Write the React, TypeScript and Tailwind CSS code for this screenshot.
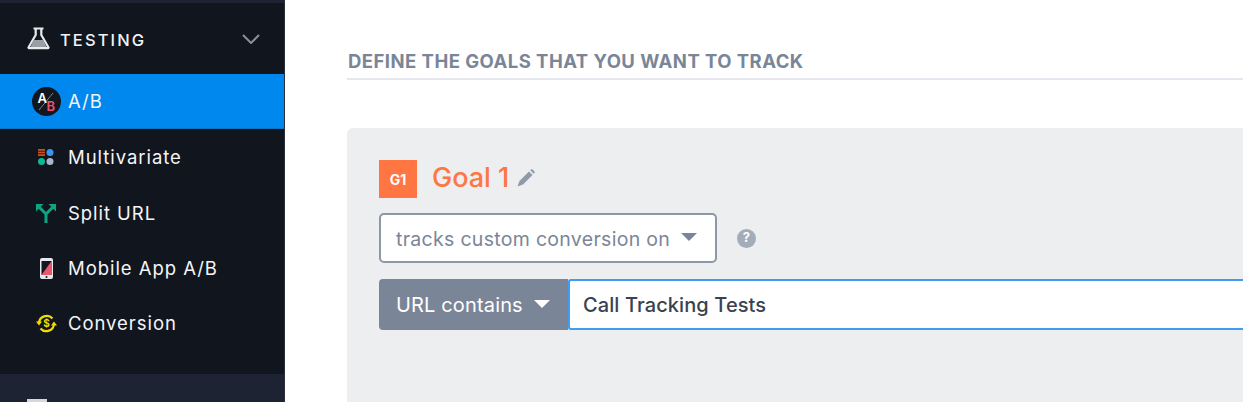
function Row({ icon, label, active }: { icon: React.ReactNode; label: string; active?: boolean }) {
  return (
    <div className={`flex items-center ${active ? "h-[55px] bg-[#0088ee] border-b border-[#0b74c4]" : "h-[55.4px]"}`}>
      <div className="w-[68px] flex justify-center pl-[24px] shrink-0">{icon}</div>
      <span className={`text-[18.5px] tracking-[0.95px] text-[#f4f5f7] ${active ? "pt-[1px]" : "pt-[3px]"}`}>{label}</span>
    </div>
  );
}

const AB = (
  <svg width="29" height="29" viewBox="0 0 29 29" className="shrink-0 mt-[1px]">
    <circle cx="14.5" cy="14.5" r="14.5" fill="#12161f" />
    <line x1="7" y1="23" x2="21" y2="6" stroke="#7d828c" strokeWidth="1" />
    <text x="5.5" y="15.5" fontSize="13" fontWeight="600" fill="#fff" fontFamily="Inter, sans-serif">A</text>
    <text x="14.5" y="24" fontSize="13" fontWeight="600" fill="#f0506e" fontFamily="Inter, sans-serif">B</text>
  </svg>
);

const Multi = (
  <svg width="16" height="16" viewBox="0 0 16 16" className="shrink-0">
    <rect x="0" y="0" width="7" height="1.8" fill="#c2511f" />
    <rect x="0" y="2.6" width="7" height="1.8" fill="#c2511f" />
    <rect x="0" y="5.2" width="7" height="1.8" fill="#c2511f" />
    <circle cx="12" cy="3.5" r="3.5" fill="#3b95ee" />
    <circle cx="3.5" cy="12.5" r="3.5" fill="#0fb893" />
    <circle cx="12" cy="12.5" r="3.5" fill="#aab4cf" />
  </svg>
);

const Split = (
  <svg width="20" height="20" viewBox="0 0 20 20" fill="none" className="shrink-0 mt-[2px]">
    <path d="M10 20V11L3 4M10 11L17 4" stroke="#0da583" strokeWidth="3" />
    <path d="M0 1H7.5L0 8.5ZM20 1H12.5L20 8.5Z" fill="#0da583" />
  </svg>
);

const Phone = (
  <svg width="13" height="21" viewBox="0 0 13 21" className="shrink-0 mt-[2px]">
    <rect x="0" y="0" width="13" height="21" rx="2" fill="#e6e8ee" />
    <rect x="1.5" y="3" width="10" height="14" fill="#12161f" />
    <path d="M11.5 3V17H1.5Z" fill="#e8566f" />
    <circle cx="6.5" cy="19" r="1" fill="#12161f" />
  </svg>
);

const Conv = (
  <svg width="21" height="21" viewBox="0 0 21 21" fill="none" stroke="#f5dc00" strokeWidth="2.2" className="shrink-0 mt-[2px]">
    <path d="M3 10.5A7.7 7.7 0 0 1 16.5 5.5" />
    <path d="M18 10.5A7.7 7.7 0 0 1 4.5 15.5" />
    <path d="M0 8.5L3 12.5L6 8.5Z" fill="#f5dc00" stroke="none" />
    <path d="M15 12.5L18 8.5L21 12.5Z" fill="#f5dc00" stroke="none" />
    <text x="10.5" y="14" textAnchor="middle" fontSize="10" fontWeight="700" fill="#f5dc00" stroke="none" fontFamily="Inter, sans-serif">$</text>
  </svg>
);

export default function App() {
  return (
    <div className="w-[1243px] h-[402px] overflow-hidden flex bg-white font-['Inter',sans-serif]">
      <aside className="w-[285px] shrink-0 h-full bg-[#11151e] border-r border-[#2a3040] flex flex-col">
        <div className="h-[3px] bg-[#1e2333]" />
        <div className="h-[71px] flex items-center pl-[27px] pr-[24px]">
          <svg width="23" height="23" viewBox="0 0 23 23" fill="none" className="mr-[10px]">
            <path d="M6.5 1.5H16.5M8.7 1.5V8L1.6 20.2a0.6 0.6 0 0 0 .5 1H20.9a0.6 0.6 0 0 0 .5-1L14.3 8V1.5" stroke="#e8eaee" strokeWidth="2.2" />
            <path d="M6.5 13H16.5L19.5 20H3.5Z" fill="#9a9ea6" />
          </svg>
          <span className="text-[16.5px] font-medium tracking-[2.1px] text-[#f1f2f4] pt-[4px]">TESTING</span>
          <svg width="18" height="10" viewBox="0 0 18 10" fill="none" className="ml-auto" stroke="#8b8f97" strokeWidth="2">
            <path d="M1 1L9 9L17 1" />
          </svg>
        </div>
        <Row active icon={AB} label="A/B" />
        <Row icon={Multi} label="Multivariate" />
        <Row icon={Split} label="Split URL" />
        <Row icon={Phone} label="Mobile App A/B" />
        <Row icon={Conv} label="Conversion" />
        <div className="mt-auto h-[28px] bg-[#1e2333] pl-[27px] pt-[25px]">
          <div className="w-[20px] h-[3px] bg-[#d5d7dc]" />
        </div>
      </aside>
      <main className="flex-1 min-w-0 pl-[62px] pt-[50px]">
        <div className="h-[30px] border-b-2 border-[#e6e7ee] pl-px text-[18.5px] font-bold tracking-[0.46px] text-[#7a8698] leading-[22px] whitespace-nowrap">
          DEFINE THE GOALS THAT YOU WANT TO TRACK
        </div>
        <div className="mt-[48px] h-[300px] bg-[#edeef0] rounded-tl-[6px] pl-[32px] pt-[32px]">
          <div className="flex items-center h-[38px]">
            <div className="w-[38px] h-[38px] bg-[#ff7642] flex items-center justify-center text-white text-[14px] font-bold">G1</div>
            <span className="ml-[15px] text-[27px] font-medium text-[#ff7642] mt-[-2px]">Goal 1</span>
            <svg width="18" height="18" viewBox="0 0 18 18" className="ml-[8px] mt-[-3px]" fill="#8f99a8">
              <path d="M12 2.5L15.5 6L6 15.5L0.5 17.5L2.5 12Z" />
              <path d="M13.2 1.3L14 0.6A1.2 1.2 0 0 1 15.6 0.6L17.4 2.4A1.2 1.2 0 0 1 17.4 4L16.7 4.8Z" />
            </svg>
          </div>
          <div className="flex items-center mt-[15px]">
            <div className="w-[338px] h-[50px] bg-white border-2 border-[#8d97a6] rounded-[5px] flex items-center pl-[15px] pt-[4px] text-[#7a8698] text-[19.5px] tracking-[0.3px] whitespace-nowrap">
              tracks custom conversion on
              <span className="ml-[11px] mt-[-6px] w-0 h-0 border-x-[8px] border-x-transparent border-t-[8px] border-t-[#7a8698]" />
            </div>
            <div className="ml-[20px] w-[19px] h-[19px] rounded-full bg-[#a3acb9] text-white text-[13px] font-bold flex items-center justify-center">?</div>
          </div>
          <div className="flex mt-[16px] h-[51px]">
            <div className="w-[189px] shrink-0 bg-[#7a8698] rounded-l-[4px] flex items-center pl-[17px] pt-[1px] text-white text-[20px] tracking-[0.15px]">
              URL contains
              <span className="ml-[11px] mt-[-2px] w-0 h-0 border-x-[8.5px] border-x-transparent border-t-[8px] border-t-white" />
            </div>
            <div className="flex-1 bg-white border-2 border-[#3f9cf0] border-r-0 rounded-l-[3px] flex items-center pl-[13px] pt-[1px] text-[#3a4250] text-[20px] tracking-[0.1px] font-medium">
              Call Tracking Tests
            </div>
          </div>
        </div>
      </main>
    </div>
  );
}
